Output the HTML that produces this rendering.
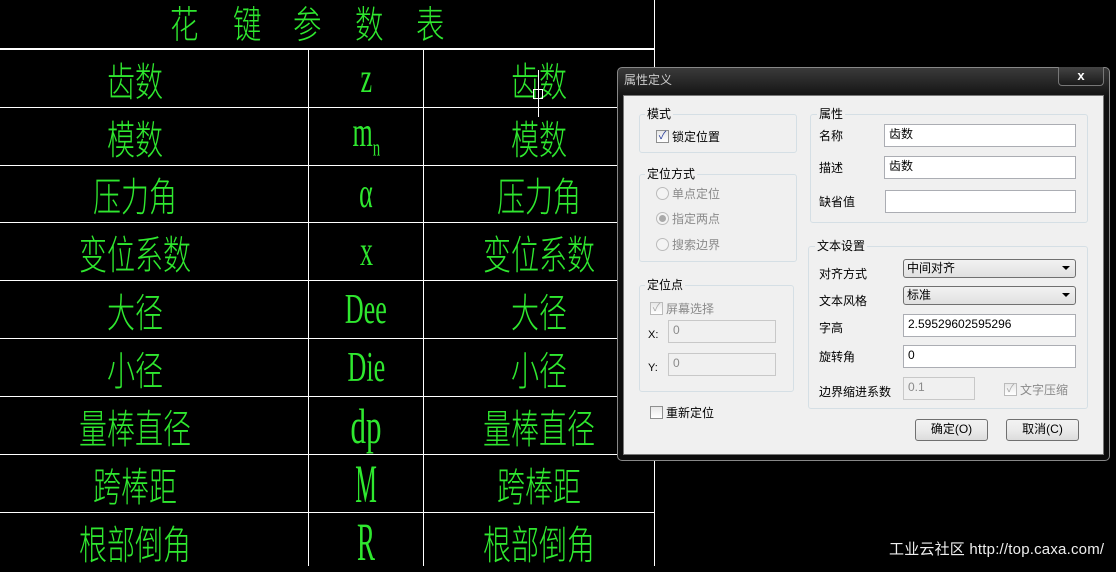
<!DOCTYPE html>
<html><head><meta charset="utf-8"><style>
*{margin:0;padding:0;box-sizing:border-box}
body{width:1116px;height:566px;background:#000;position:relative;overflow:hidden;font-family:"Liberation Sans","Noto Sans CJK SC",sans-serif}
.hl{position:absolute;left:0;width:655px;height:1px;background:#fff}
.vl{position:absolute;width:1px;background:#fff}
.c{position:absolute;display:flex;align-items:center;justify-content:center;color:#2fe82f;font-family:"Noto Sans CJK SC",sans-serif;font-weight:300;font-size:40px;line-height:1;white-space:nowrap}
.c span{display:inline-block;transform:scaleX(.7)}
.c.l span{font-family:"Liberation Serif",serif;font-weight:400;font-size:42px;transform:scaleX(.62)}
.tt{position:absolute;top:0;color:#2fe82f;font-family:"Noto Sans CJK SC",sans-serif;font-weight:300;font-size:38px;line-height:44px;transform:scaleX(.75);transform-origin:left}
.dlg{position:absolute;left:617px;top:67px;width:493px;height:394px;background:linear-gradient(#3a3a3a,#111 30px,#0c0c0c);border:1px solid #888;border-radius:5px}
.cl{position:absolute;left:623px;top:95px;width:481px;height:360px;background:#f0f0f0;border:1px solid #777}
.d{position:absolute;font-size:12px;color:#000;line-height:14px;white-space:nowrap;font-family:"Liberation Sans","Noto Sans CJK SC",sans-serif}
.g{color:#8a8a8a}
.grp{position:absolute;border:1px solid #d5dfe5;border-radius:3px}
.in{position:absolute;background:#fff;border:1px solid #abadb3;font-size:12px;padding:2px 4px;line-height:14px}
.in.dis{background:#f0f0f0;border-color:#c8c8c8;color:#8a8a8a}
.cb{position:absolute;width:13px;height:13px;border:1px solid #8e8f8f;background:linear-gradient(#e8e8e8,#fff);font-size:11px;line-height:11px;text-align:center;color:#2a3f9b}
.rd{position:absolute;width:13px;height:13px;border:1px solid #bbb;border-radius:50%;background:#f4f4f4}
.cmb{position:absolute;border:1px solid #707070;border-radius:3px;background:linear-gradient(#f2f2f2,#e0e0e0);font-size:12px;padding:1px 3px;line-height:14px}
.cmb:after{content:"";position:absolute;right:5px;top:6px;border:4px solid transparent;border-top:4px solid #000}
.btn{position:absolute;border:1px solid #707070;border-radius:3px;background:linear-gradient(#f2f2f2,#ebebeb 50%,#dcdcdc);font-size:12px;text-align:center;line-height:19px}
</style></head><body>
<div class="tt" style="left:170px;">花</div>
<div class="tt" style="left:233px;">键</div>
<div class="tt" style="left:293px;">参</div>
<div class="tt" style="left:355px;">数</div>
<div class="tt" style="left:416px;">表</div>
<div class="hl" style="top:48px;height:2px"></div>
<div class="hl" style="top:107px"></div>
<div class="hl" style="top:165px"></div>
<div class="hl" style="top:222px"></div>
<div class="hl" style="top:280px"></div>
<div class="hl" style="top:338px"></div>
<div class="hl" style="top:396px"></div>
<div class="hl" style="top:454px"></div>
<div class="hl" style="top:512px"></div>
<div class="vl" style="left:308px;top:49px;height:517px"></div>
<div class="vl" style="left:423px;top:49px;height:517px"></div>
<div class="vl" style="left:654px;top:0;height:566px"></div>

<div class="c" style="left:-38px;width:346px;top:50px;height:57px"><span>齿数</span></div>
<div class="c l" style="left:309px;width:114px;top:50px;height:57px"><span>z</span></div>
<div class="c" style="left:424px;width:230px;top:50px;height:57px"><span>齿数</span></div>
<div class="c" style="left:-38px;width:346px;top:108px;height:57px"><span>模数</span></div>
<div class="c l" style="left:309px;width:114px;top:108px;height:57px"><span>m<sub style="font-size:24px">n</sub></span></div>
<div class="c" style="left:424px;width:230px;top:108px;height:57px"><span>模数</span></div>
<div class="c" style="left:-38px;width:346px;top:166px;height:56px"><span>压力角</span></div>
<div class="c l" style="left:309px;width:114px;top:166px;height:56px"><span>α</span></div>
<div class="c" style="left:424px;width:230px;top:166px;height:56px"><span>压力角</span></div>
<div class="c" style="left:-38px;width:346px;top:223px;height:57px"><span>变位系数</span></div>
<div class="c l" style="left:309px;width:114px;top:223px;height:57px"><span>x</span></div>
<div class="c" style="left:424px;width:230px;top:223px;height:57px"><span>变位系数</span></div>
<div class="c" style="left:-38px;width:346px;top:281px;height:57px"><span>大径</span></div>
<div class="c l" style="left:309px;width:114px;top:281px;height:57px"><span>Dee</span></div>
<div class="c" style="left:424px;width:230px;top:281px;height:57px"><span>大径</span></div>
<div class="c" style="left:-38px;width:346px;top:339px;height:57px"><span>小径</span></div>
<div class="c l" style="left:309px;width:114px;top:339px;height:57px"><span>Die</span></div>
<div class="c" style="left:424px;width:230px;top:339px;height:57px"><span>小径</span></div>
<div class="c" style="left:-38px;width:346px;top:397px;height:57px"><span>量棒直径</span></div>
<div class="c l" style="left:309px;width:114px;top:397px;height:57px"><span style="font-size:50px">dp</span></div>
<div class="c" style="left:424px;width:230px;top:397px;height:57px"><span>量棒直径</span></div>
<div class="c" style="left:-38px;width:346px;top:455px;height:57px"><span>跨棒距</span></div>
<div class="c l" style="left:309px;width:114px;top:455px;height:57px"><span style="font-size:54px;transform:scaleX(.45)">M</span></div>
<div class="c" style="left:424px;width:230px;top:455px;height:57px"><span>跨棒距</span></div>
<div class="c" style="left:-38px;width:346px;top:513px;height:57px"><span>根部倒角</span></div>
<div class="c l" style="left:309px;width:114px;top:513px;height:57px"><span style="font-size:54px;transform:scaleX(.5)">R</span></div>
<div class="c" style="left:424px;width:230px;top:513px;height:57px"><span>根部倒角</span></div>
<div class="vl" style="left:538px;top:70px;height:47px"></div>
<div style="position:absolute;left:533px;top:89px;width:10px;height:10px;border:1px solid #fff"></div>

<div class="dlg"></div>
<div class="d" style="left:624px;top:73px;color:#ccc">属性定义</div>
<div style="position:absolute;left:1058px;top:67px;width:46px;height:19px;border:1px solid #777;border-top:none;border-radius:0 0 4px 4px;background:linear-gradient(#444,#1a1a1a);color:#fff;font-weight:bold;font-size:13px;text-align:center;line-height:17px">x</div>
<div class="cl"></div>

<div class="grp" style="left:639px;top:114px;width:158px;height:39px"></div>
<div class="d" style="left:645px;top:107px;background:#f0f0f0;padding:0 2px">模式</div>
<div class="cb" style="left:656px;top:130px">✓</div>
<div class="d" style="left:672px;top:130px">锁定位置</div>

<div class="grp" style="left:639px;top:174px;width:158px;height:88px"></div>
<div class="d" style="left:645px;top:167px;background:#f0f0f0;padding:0 2px">定位方式</div>
<div class="rd" style="left:656px;top:187px"></div><div class="d g" style="left:672px;top:187px">单点定位</div>
<div class="rd" style="left:656px;top:212px"><div style="margin:2px;width:7px;height:7px;border-radius:50%;background:#aaa"></div></div><div class="d g" style="left:672px;top:212px">指定两点</div>
<div class="rd" style="left:656px;top:238px"></div><div class="d g" style="left:672px;top:238px">搜索边界</div>

<div class="grp" style="left:639px;top:285px;width:155px;height:107px"></div>
<div class="d" style="left:645px;top:278px;background:#f0f0f0;padding:0 2px">定位点</div>
<div class="cb" style="left:650px;top:302px;color:#aaa;border-color:#bbb">✓</div>
<div class="d g" style="left:666px;top:302px">屏幕选择</div>
<div class="d" style="left:648px;top:328px;font-size:11px">X:</div>
<div class="in dis" style="left:668px;top:320px;width:108px;height:23px">0</div>
<div class="d" style="left:648px;top:361px;font-size:11px">Y:</div>
<div class="in dis" style="left:668px;top:353px;width:108px;height:23px">0</div>
<div class="cb" style="left:650px;top:406px"></div>
<div class="d" style="left:666px;top:406px">重新定位</div>

<div class="grp" style="left:810px;top:114px;width:278px;height:109px"></div>
<div class="d" style="left:817px;top:107px;background:#f0f0f0;padding:0 2px">属性</div>
<div class="d" style="left:819px;top:129px">名称</div>
<div class="in" style="left:884px;top:124px;width:192px;height:23px">齿数</div>
<div class="d" style="left:819px;top:161px">描述</div>
<div class="in" style="left:884px;top:156px;width:192px;height:23px">齿数</div>
<div class="d" style="left:819px;top:195px">缺省值</div>
<div class="in" style="left:885px;top:190px;width:191px;height:23px"></div>

<div class="grp" style="left:808px;top:246px;width:280px;height:163px"></div>
<div class="d" style="left:815px;top:239px;background:#f0f0f0;padding:0 2px">文本设置</div>
<div class="d" style="left:819px;top:267px">对齐方式</div>
<div class="cmb" style="left:903px;top:259px;width:173px;height:19px">中间对齐</div>
<div class="d" style="left:819px;top:294px">文本风格</div>
<div class="cmb" style="left:903px;top:286px;width:173px;height:19px">标准</div>
<div class="d" style="left:819px;top:321px">字高</div>
<div class="in" style="left:903px;top:314px;width:173px;height:23px">2.59529602595296</div>
<div class="d" style="left:819px;top:350px">旋转角</div>
<div class="in" style="left:903px;top:345px;width:173px;height:23px">0</div>
<div class="d" style="left:819px;top:385px">边界缩进系数</div>
<div class="in dis" style="left:903px;top:377px;width:72px;height:23px">0.1</div>
<div class="cb" style="left:1004px;top:383px;color:#aaa;border-color:#bbb">✓</div>
<div class="d g" style="left:1020px;top:383px">文字压缩</div>

<div class="btn" style="left:915px;top:419px;width:73px;height:22px">确定(O)</div>
<div class="btn" style="left:1006px;top:419px;width:73px;height:22px">取消(C)</div>

<div class="d" style="left:889px;top:541px;color:#eee;font-size:15px;line-height:18px;letter-spacing:0.2px">工业云社区 http://top.caxa.com/</div>
</body></html>
